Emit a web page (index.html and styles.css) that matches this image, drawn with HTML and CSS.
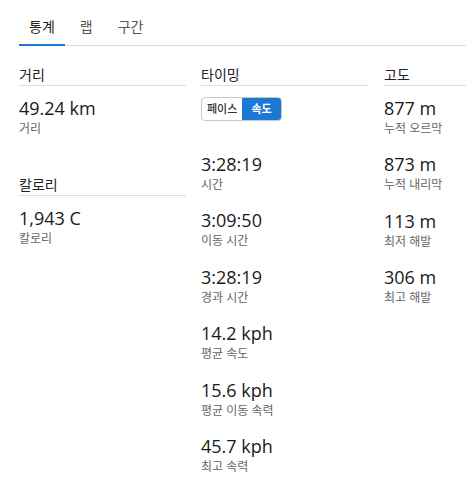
FILE: index.html
```html
<!DOCTYPE html>
<html lang="ko">
<head>
<meta charset="utf-8">
<link rel="stylesheet" href="styles.css">
</head>
<body>
<div class="page">
  <div class="tabs">
    <div class="tab active">통계</div>
    <div class="tab">랩</div>
    <div class="tab">구간</div>
  </div>
  <div class="columns">
    <div class="col">
      <div class="section">
        <div class="head">거리</div>
        <div class="items">
          <div class="item"><div class="val">49.24 km</div><div class="lbl">거리</div></div>
        </div>
      </div>
      <div class="section">
        <div class="head">칼로리</div>
        <div class="items">
          <div class="item"><div class="val">1,943 C</div><div class="lbl">칼로리</div></div>
        </div>
      </div>
    </div>
    <div class="col">
      <div class="section">
        <div class="head">타이밍</div>
        <div class="toggle"><span class="opt">페이스</span><span class="opt on">속도</span></div>
        <div class="items spaced">
          <div class="item"><div class="val">3:28:19</div><div class="lbl">시간</div></div>
          <div class="item"><div class="val">3:09:50</div><div class="lbl">이동 시간</div></div>
          <div class="item"><div class="val">3:28:19</div><div class="lbl">경과 시간</div></div>
          <div class="item"><div class="val">14.2 kph</div><div class="lbl">평균 속도</div></div>
          <div class="item"><div class="val">15.6 kph</div><div class="lbl">평균 이동 속력</div></div>
          <div class="item"><div class="val">45.7 kph</div><div class="lbl">최고 속력</div></div>
        </div>
      </div>
    </div>
    <div class="col">
      <div class="section">
        <div class="head">고도</div>
        <div class="items">
          <div class="item"><div class="val">877 m</div><div class="lbl">누적 오르막</div></div>
          <div class="item"><div class="val">873 m</div><div class="lbl">누적 내리막</div></div>
          <div class="item"><div class="val">113 m</div><div class="lbl">최저 해발</div></div>
          <div class="item"><div class="val">306 m</div><div class="lbl">최고 해발</div></div>
        </div>
      </div>
    </div>
  </div>
</div>
</body>
</html>
```
FILE: styles.css
```css
html, body {
  margin: 0;
  padding: 0;
  background: #fff;
  overflow: hidden;
}
body {
  font-family: "Open Sans", "Noto Sans CJK KR", sans-serif;
  color: #111;
}
.page {
  width: 447px;
  padding: 0 0 0 19px;
  overflow: hidden;
}
.tabs {
  display: flex;
  gap: 5px;
  padding-top: 17px;
  border-bottom: 1.5px solid #dcdcdc;
}
.tab {
  font-size: 14px;
  line-height: 20px;
  padding: 0 10px 7px;
  color: #555;
  margin-bottom: -1.5px;
  border-bottom: 2px solid transparent;
}
.tab.active {
  color: #222;
  border-bottom-color: #1c78d4;
}
.columns {
  display: grid;
  grid-template-columns: 167px 168px 167px;
  column-gap: 15px;
  margin-top: 19px;
}
.section {
  padding-bottom: 22.5px;
}
.head {
  font-size: 14px;
  line-height: 20px;
  color: #222;
  border-bottom: 1px solid #dedede;
  margin-bottom: 10px;
}
.item {
  margin-bottom: 14.5px;
}
.val {
  font-size: 18px;
  line-height: 24px;
  color: #1a1a1a;
}
.lbl {
  font-size: 12px;
  line-height: 18px;
  color: #666;
}
.toggle {
  display: flex;
  width: fit-content;
  margin-top: 11px;
  border: 1px solid #c8c8c8;
  border-radius: 4px;
  overflow: hidden;
  height: 22px;
}
.opt {
  font-size: 11px;
  line-height: 22px;
  padding: 0 5px;
  color: #333;
  font-weight: 500;
}
.opt.on {
  background: #1c78d4;
  color: #fff;
  padding: 0 9px 0 9px;
  font-weight: 700;
}
.items.spaced {
  margin-top: 31px;
}
```
